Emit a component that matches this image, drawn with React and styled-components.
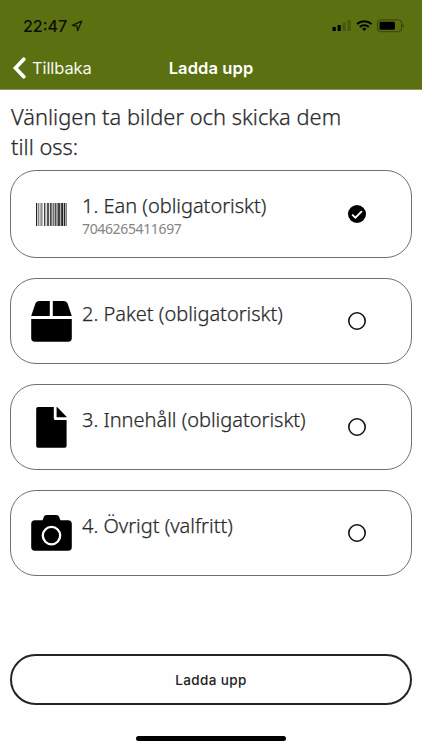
import React from 'react';
import styled, { createGlobalStyle } from 'styled-components';

const GlobalStyle = createGlobalStyle`
  * {
    box-sizing: border-box;
  }

  body {
    margin: 0;
    background: #fefefe;
  }
`;

const BarcodeIcon = () => (
  <svg width="31" height="23" viewBox="0 0 31 23" fill="#222">
    <rect x="0" y="0" width="1.2" height="23" />
    <rect x="2" y="0" width="1.4" height="23" opacity="0.55" />
    <rect x="4.4" y="0" width="1.4" height="23" opacity="0.6" />
    <rect x="6.2" y="0" width="0.8" height="23" opacity="0.4" />
    <rect x="8" y="0" width="1.4" height="23" opacity="0.85" />
    <rect x="10.8" y="0" width="2.4" height="23" opacity="0.75" />
    <rect x="14.2" y="0" width="1.4" height="23" />
    <rect x="16.6" y="0" width="1.2" height="23" opacity="0.8" />
    <rect x="18.6" y="0" width="1.9" height="23" opacity="0.8" />
    <rect x="21.4" y="0" width="3" height="23" opacity="0.85" />
    <rect x="25.2" y="0" width="2.1" height="23" />
    <rect x="28" y="0" width="1.1" height="23" />
    <rect x="29.6" y="0" width="1.2" height="23" opacity="0.7" />
  </svg>
);

const BoxIcon = () => (
  <svg width="41" height="41" viewBox="0 0 41 41">
    <path d="M18.800 0v15H.2L4.400 2.600A3.800 3.800 0 0 1 8 0zM40.800 15H21.800V0H33a3.800 3.800 0 0 1 3.600 2.600zM.2 18h40.600v19a3.800 3.800 0 0 1-3.800 3.800H4A3.800 3.800 0 0 1 .2 37z" />
  </svg>
);

const FileIcon = () => (
  <svg width="31" height="41" viewBox="0 0 31 41">
    <path d="M17.800 0v11.200c0 1 .8 1.800 1.800 1.800h11v26a1.800 1.800 0 0 1-1.800 1.800H2A1.800 1.800 0 0 1 .2 39V1.800A1.800 1.800 0 0 1 2 0zM20.600 0h.5l9.500 9.700v.6h-10z" />
  </svg>
);

const CameraIcon = () => (
  <svg width="41" height="36" viewBox="0 0 41 36">
    <path d="M4 5.200h7.600l1.200-3.300A3 3 0 0 1 15.600 0h9.800a3 3 0 0 1 2.800 1.900l1.200 3.300H37A3.800 3.800 0 0 1 40.800 9v23a3.800 3.800 0 0 1-3.800 3.800H4A3.800 3.800 0 0 1 .2 32V9A3.800 3.800 0 0 1 4 5.200z" />
    <circle cx="20.500" cy="20.600" r="8.700" fill="none" stroke="#fff" strokeWidth="2.300" />
  </svg>
);

const CheckIcon = () => (
  <svg width="18" height="18" viewBox="0 0 18 18">
    <circle cx="9" cy="9" r="9" />
    <path d="M4.200 9.600l3.200 3 6.500-6.500" fill="none" stroke="#fff" strokeWidth="1.900" />
  </svg>
);

const CircleIcon = () => (
  <svg width="18" height="18" viewBox="0 0 18 18">
    <circle cx="9" cy="9" r="8.200" fill="none" stroke="#111" strokeWidth="1.600" />
  </svg>
);

const LocationIcon = () => (
  <svg width="12" height="12" viewBox="0 0 12 12">
    <path
      d="M10.600 1.200L1.300 5.300l4.600.7.700 4.700z"
      fill="none"
      stroke="#111705"
      strokeWidth="1.300"
      strokeLinejoin="round"
    />
  </svg>
);

const StatusIcons = () => (
  <svg width="74" height="14" viewBox="0 0 74 14">
    <rect x="1.600" y="8" width="3.200" height="4" rx=".6" />
    <rect x="6.600" y="6" width="3.200" height="6" rx=".6" />
    <rect x="11.600" y="3.500" width="3.200" height="8.500" rx=".6" opacity=".22" />
    <rect x="16.600" y="1" width="3.200" height="11" rx=".6" opacity=".22" />
    <g fill="none" stroke="#000" strokeWidth="2.100">
      <path d="M26 5a11 11 0 0 1 14.600 0" />
      <path d="M28.800 8a6.700 6.700 0 0 1 9 0" />
    </g>
    <path d="M33.300 12l-2.200-2.200a3.200 3.200 0 0 1 4.400 0z" />
    <rect x="46.500" y=".9" width="24" height="11.800" rx="3" fill="none" stroke="#000" strokeOpacity=".4" />
    <rect x="48.500" y="2.800" width="15.400" height="8" rx="1.300" />
    <path d="M71.600 4.800c1.700.7 1.700 3.300 0 4z" opacity=".45" />
  </svg>
);

const items = [
  { title: '1. Ean (obligatoriskt)', code: '7046265411697', Icon: BarcodeIcon, done: true },
  { title: '2. Paket (obligatoriskt)', Icon: BoxIcon },
  { title: '3. Innehåll (obligatoriskt)', Icon: FileIcon },
  { title: '4. Övrigt (valfritt)', Icon: CameraIcon },
];

const App = () => {
  return (
    <Screen>
      <GlobalStyle />
      <Header>
        <StatusBar>
          <Clock>
            22:47
            <LocationIcon />
          </Clock>
          <StatusIcons />
        </StatusBar>
        <NavBar>
          <BackButton>
            <svg width="14" height="22" viewBox="0 0 14 22">
              <path d="M11.800 2.300L3.500 11l8.300 8.700" fill="none" stroke="#fff" strokeWidth="3.700" strokeLinecap="round" />
            </svg>
            Tillbaka
          </BackButton>
          <NavTitle>Ladda upp</NavTitle>
        </NavBar>
      </Header>
      <Content>
        <Heading>
          Vänligen ta bilder och skicka dem
          <br />
          till oss:
        </Heading>
        <List>
          {items.map(({ title, code, Icon, done }) => (
            <Card key={title} $tall={Boolean(code)}>
              <IconSlot>
                <Icon />
              </IconSlot>
              <Label>
                <Title>{title}</Title>
                {code && <Code>{code}</Code>}
              </Label>
              {done ? <CheckIcon /> : <CircleIcon />}
            </Card>
          ))}
        </List>
        <UploadButton>Ladda upp</UploadButton>
      </Content>
      <HomeIndicator />
    </Screen>
  );
};

const Screen = styled.div`
  width: 422px;
  height: 750px;
  display: flex;
  flex-direction: column;
  overflow: hidden;
  background: #fefefe;
  font-family: 'Noto Sans', 'Open Sans', sans-serif;
  color: #2a2a2a;

  svg {
    display: block;
    flex: none;
  }
`;

const Header = styled.header`
  height: 90px;
  flex: none;
  background: #5b7011;
  border-bottom: 1px solid #8c9666;
  font-family: Inter, sans-serif;
`;

const StatusBar = styled.div`
  height: 46px;
  padding: 6px 17px 0 23px;
  display: flex;
  align-items: center;
  justify-content: space-between;
`;

const Clock = styled.div`
  display: flex;
  align-items: center;
  gap: 4px;
  font-size: 16px;
  font-weight: 500;
  line-height: 20px;
  color: #0b0f02;
`;

const NavBar = styled.div`
  height: 43px;
  padding: 0 12px;
  display: grid;
  grid-template-columns: 1fr auto 1fr;
  align-items: center;
`;

const BackButton = styled.button`
  padding: 0;
  border: 0;
  background: none;
  display: flex;
  align-items: center;
  gap: 6px;
  font: 400 16.5px/20px Inter, sans-serif;
  letter-spacing: -0.1px;
  color: #f6f8ee;
`;

const NavTitle = styled.div`
  font-size: 16.5px;
  font-weight: 600;
  line-height: 20px;
  letter-spacing: 0.1px;
  color: #fff;
`;

const Content = styled.main`
  flex: 1;
  display: flex;
  flex-direction: column;
  padding: 12px 10px 0;
`;

const Heading = styled.h1`
  margin: 0;
  height: 68px;
  padding-left: 1px;
  font-size: 21.8px;
  font-weight: 300;
  line-height: 29.5px;
  letter-spacing: 0.03px;
  white-space: nowrap;
  -webkit-text-stroke: 0.25px;
`;

const List = styled.div`
  display: flex;
  flex-direction: column;
  gap: 20px;
`;

const Card = styled.div`
  height: ${({ $tall }) => ($tall ? '88px' : '86px')};
  display: flex;
  align-items: center;
  padding-right: 45.5px;
  border: 1px solid #707070;
  border-radius: 26px;
`;

const IconSlot = styled.div`
  width: 81px;
  display: flex;
  justify-content: center;
`;

const Label = styled.div`
  flex: 1;
  align-self: stretch;
  margin-left: -10px;
  padding-top: 21px;
`;

const Title = styled.div`
  font-size: 20px;
  font-weight: 300;
  line-height: 28px;
  letter-spacing: -0.01px;
  white-space: nowrap;
  -webkit-text-stroke: 0.25px;
`;

const Code = styled.div`
  font-size: 14px;
  line-height: 18px;
  letter-spacing: -0.36px;
  color: #858585;
`;

const UploadButton = styled.button`
  height: 51px;
  margin-top: 78px;
  border: 2px solid #242424;
  border-radius: 26px;
  background: none;
  font: 500 13.5px/20px Inter, sans-serif;
  letter-spacing: 0.4px;
  color: #222;
`;

const HomeIndicator = styled.div`
  width: 150px;
  height: 5px;
  margin: 0 auto 9px;
  flex: none;
  border-radius: 3px;
  background: #000;
`;

export default App;
